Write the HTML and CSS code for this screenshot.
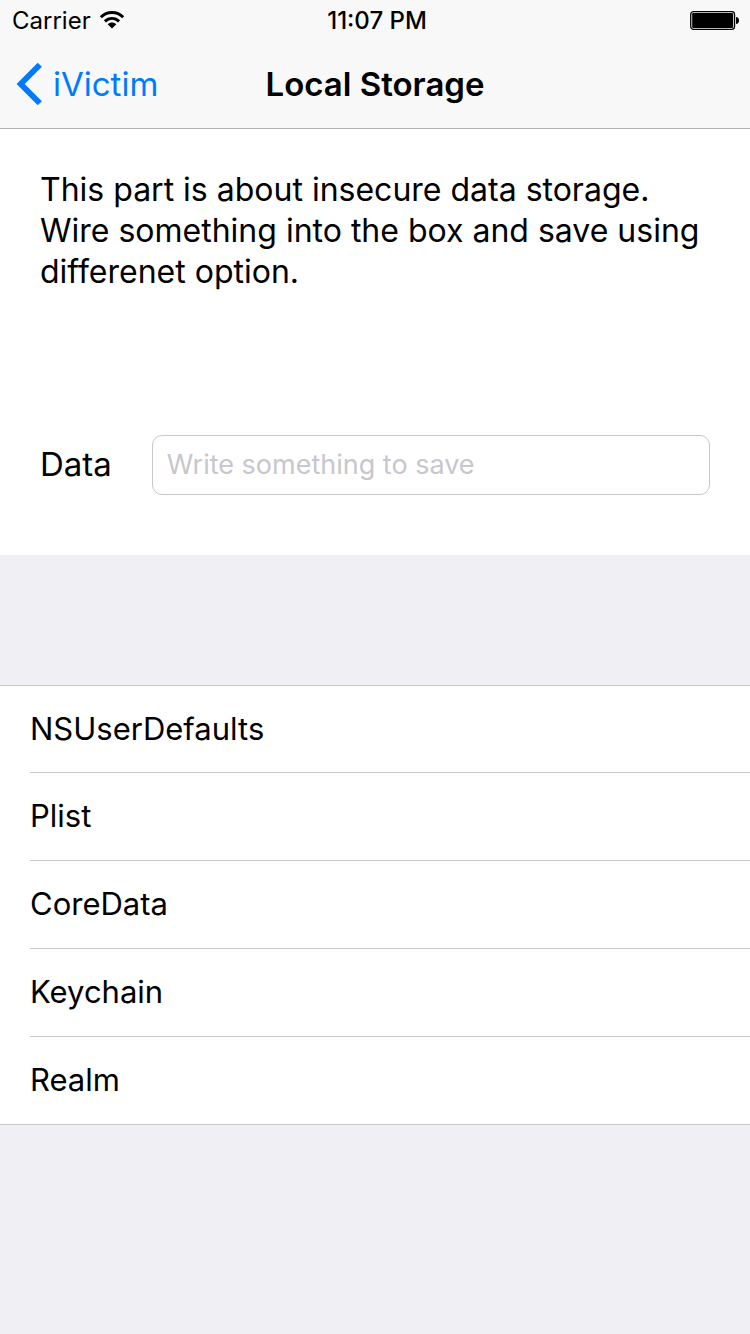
FILE: index.html
```html
<!DOCTYPE html>
<html lang="en">
<head>
<meta charset="utf-8">
<meta name="viewport" content="width=device-width, initial-scale=1">
<title>Local Storage</title>
<link rel="stylesheet" href="styles.css">
</head>
<body>
<header class="top">
  <div class="status">
    <div class="carrier">
      <span class="carrier-name">Carrier</span>
      <svg class="wifi" width="26" height="20" viewBox="0 0 26 20" aria-hidden="true">
        <g fill="none" stroke="#000" stroke-width="2.9">
          <path d="M1.8 7.2C8 .9 18 .9 24.2 7.2"/>
          <path d="M5.9 11.4c4-4 10.200-4 14.200 0"/>
        </g>
        <path d="M13 18.600l-4.300-4.300c2.300-2.400 6.300-2.400 8.600 0z"/>
      </svg>
    </div>
    <time class="clock">11:07 PM</time>
    <svg class="battery" width="50" height="20" viewBox="0 0 50 20" aria-hidden="true">
      <rect x=".75" y="1.650" width="43.800" height="17.700" rx="2.800" fill="none" stroke="#000" stroke-width="1.300"/>
      <rect x="2.200" y="3.100" width="40.900" height="14.800" rx="1.200"/>
      <path d="M46 7c1.900 0 3 1.500 3 3.500S47.900 14 46 14z"/>
    </svg>
  </div>
  <nav class="nav">
    <button class="back" type="button">
      <svg width="28" height="44" viewBox="0 0 28 44" aria-hidden="true">
        <path d="M24.800 2.800L5.700 22l19.100 19.200" fill="none" stroke="#007aff" stroke-width="5.800"/>
      </svg>
      <span>iVictim</span>
    </button>
    <h1 class="title">Local Storage</h1>
  </nav>
</header>
<main>
  <section class="intro">
    <p class="about">This part is about insecure data storage. Wire something into the box and save using differenet option.</p>
    <div class="field">
      <label for="data">Data</label>
      <input id="data" type="text" placeholder="Write something to save">
    </div>
  </section>
  <ul class="options">
    <li><button type="button">NSUserDefaults</button></li>
    <li><button type="button">Plist</button></li>
    <li><button type="button">CoreData</button></li>
    <li><button type="button">Keychain</button></li>
    <li><button type="button">Realm</button></li>
  </ul>
</main>
</body>
</html>
```
FILE: styles.css
```css
* { box-sizing: border-box; }

body {
  margin: 0;
  background: #efeff4;
  color: #000;
  font-family: Inter, "Liberation Sans", sans-serif;
}

button, input { font: inherit; }

button {
  border: 0;
  background: none;
  color: inherit;
}

svg { flex: none; }

.top {
  background: #f8f8f8;
  border-bottom: 1px solid #b2b2b2;
}

.status {
  display: grid;
  grid-template-columns: 1fr auto 1fr;
  align-items: center;
  height: 40px;
  padding: 0 10px 0 12px;
  font-size: 24px;
  line-height: 30px;
}

.carrier {
  display: flex;
  align-items: center;
  gap: 8px;
}

.carrier-name, .clock { padding-top: 2px; }

.clock {
  padding-left: 2px;
  font-weight: 500;
}

.battery { justify-self: end; }

.nav {
  display: grid;
  grid-template-columns: 1fr auto 1fr;
  align-items: center;
  height: 88px;
  padding: 0 15px;
}

.back {
  display: flex;
  align-items: center;
  justify-self: start;
  gap: 10px;
  padding: 0;
  color: #007aff;
  font-size: 33px;
}

.title {
  margin: 0;
  font-size: 33px;
  font-weight: 600;
}

.intro {
  padding: 40px 40px 60px;
  background: #fff;
}

.about {
  min-height: 266px;
  margin: 0;
  font-size: 32px;
  line-height: 41px;
}

.field {
  display: flex;
  align-items: center;
  gap: 40px;
}

.field label {
  padding-bottom: 2px;
  font-size: 33px;
  line-height: 40px;
}

.field input {
  flex: 1;
  min-width: 0;
  height: 60px;
  padding: 0 14px 2px;
  border: 1px solid #c8c8cc;
  border-radius: 10px;
  background: #fff;
  font-size: 27px;
}

.field input::placeholder {
  color: #c7c7cd;
  opacity: 1;
}

.options {
  margin: 130px 0 0;
  padding: 0;
  border-top: 1px solid #c8c7cc;
  background: #fff;
  list-style: none;
}

.options li { padding-left: 30px; }

.options button {
  display: block;
  width: 100%;
  height: 88px;
  padding: 0 0 2px;
  border-bottom: 1px solid #c8c7cc;
  font-size: 31px;
  text-align: left;
}

.options li:first-child button { height: 87px; }

.options li:last-child { padding-left: 0; }

.options li:last-child button { padding-left: 30px; }
```
